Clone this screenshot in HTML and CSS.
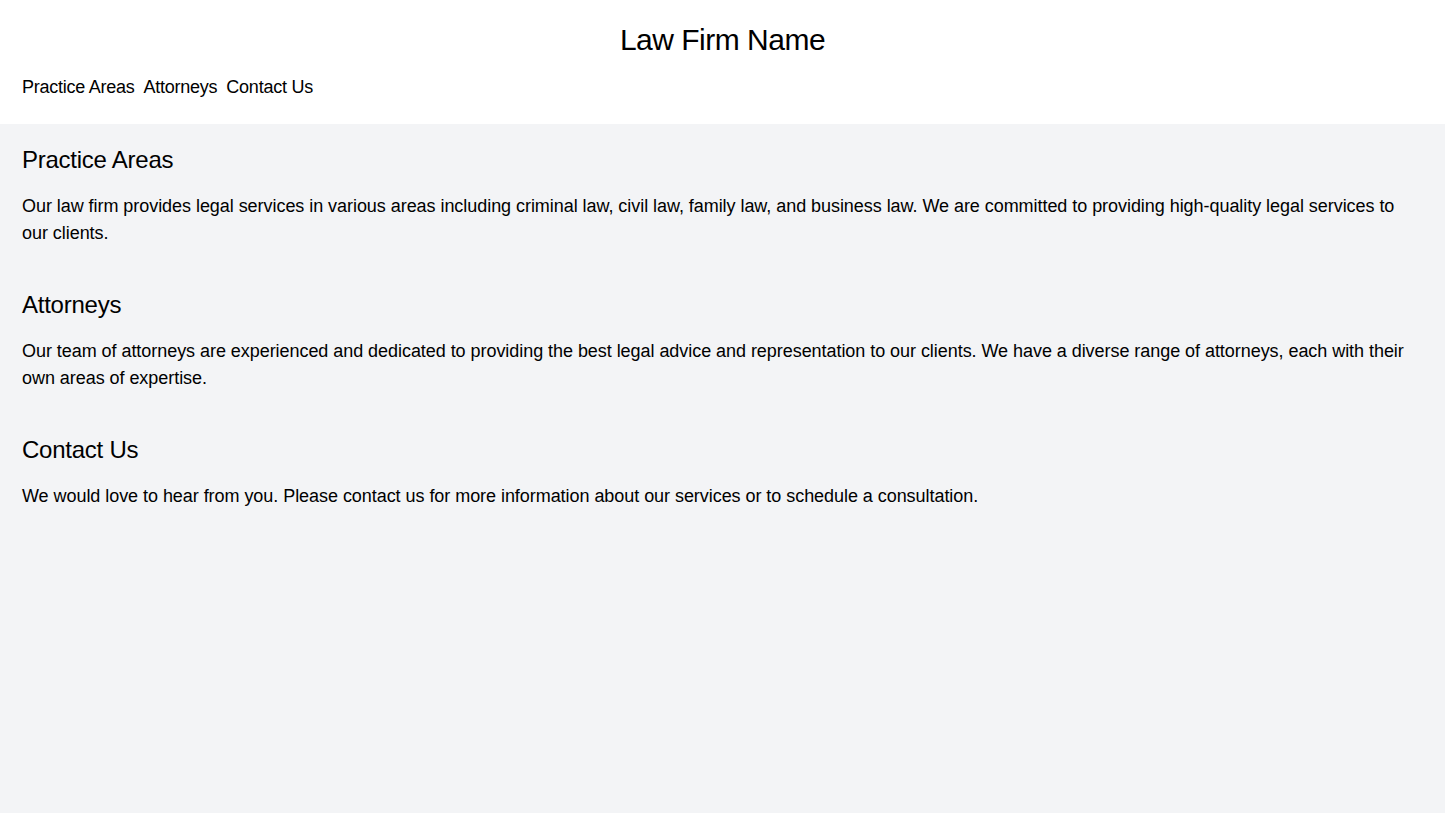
FILE: index.html
```html
<!DOCTYPE html>
<html lang="en">
<head>
  <meta charset="UTF-8">
  <title>Law Firm Name</title>
  <link rel="stylesheet" href="styles.css">
</head>
<body>

<header class="site-header">
  <h1 class="site-title">Law Firm Name</h1>
  <nav class="site-nav">
    <a href="#practice-areas">Practice Areas</a>
    <a href="#attorneys">Attorneys</a>
    <a href="#contact">Contact Us</a>
  </nav>
</header>

<main class="content">
  <section id="practice-areas" class="section">
    <h2>Practice Areas</h2>
    <p>Our law firm provides legal services in various areas including criminal law, civil law, family law, and business law. We are committed to providing high-quality legal services to our clients.</p>
  </section>

  <section id="attorneys" class="section">
    <h2>Attorneys</h2>
    <p>Our team of attorneys are experienced and dedicated to providing the best legal advice and representation to our clients. We have a diverse range of attorneys, each with their own areas of expertise.</p>
  </section>

  <section id="contact" class="section">
    <h2>Contact Us</h2>
    <p>We would love to hear from you. Please contact us for more information about our services or to schedule a consultation.</p>
  </section>
</main>

</body>
</html>
```
FILE: styles.css
```css
html, body {
  height: 100%;
}
body {
  margin: 0;
  font-family: "Liberation Sans", Arial, sans-serif;
  color: #000;
  background-color: #f3f4f6;
}
.site-header {
  background-color: #fff;
  padding: 22px 22px 23px;
}
.site-title {
  margin: 0 0 15px 0;
  font-size: 30px;
  line-height: 36px;
  font-weight: normal;
  text-align: center;
  letter-spacing: -0.5px;
}
.site-nav {
  display: flex;
  gap: 9px;
}
.site-nav a {
  color: #000;
  text-decoration: none;
  font-size: 18px;
  line-height: 28px;
  letter-spacing: -0.25px;
}
.content {
  padding: 20px 22px;
}
.section {
  margin-bottom: 42px;
}
.section h2 {
  margin: 0 0 17px 0;
  font-size: 24px;
  line-height: 32px;
  font-weight: normal;
  letter-spacing: -0.25px;
}
.section p {
  margin: 0;
  font-size: 18px;
  line-height: 27px;
  letter-spacing: -0.05px;
}
```
